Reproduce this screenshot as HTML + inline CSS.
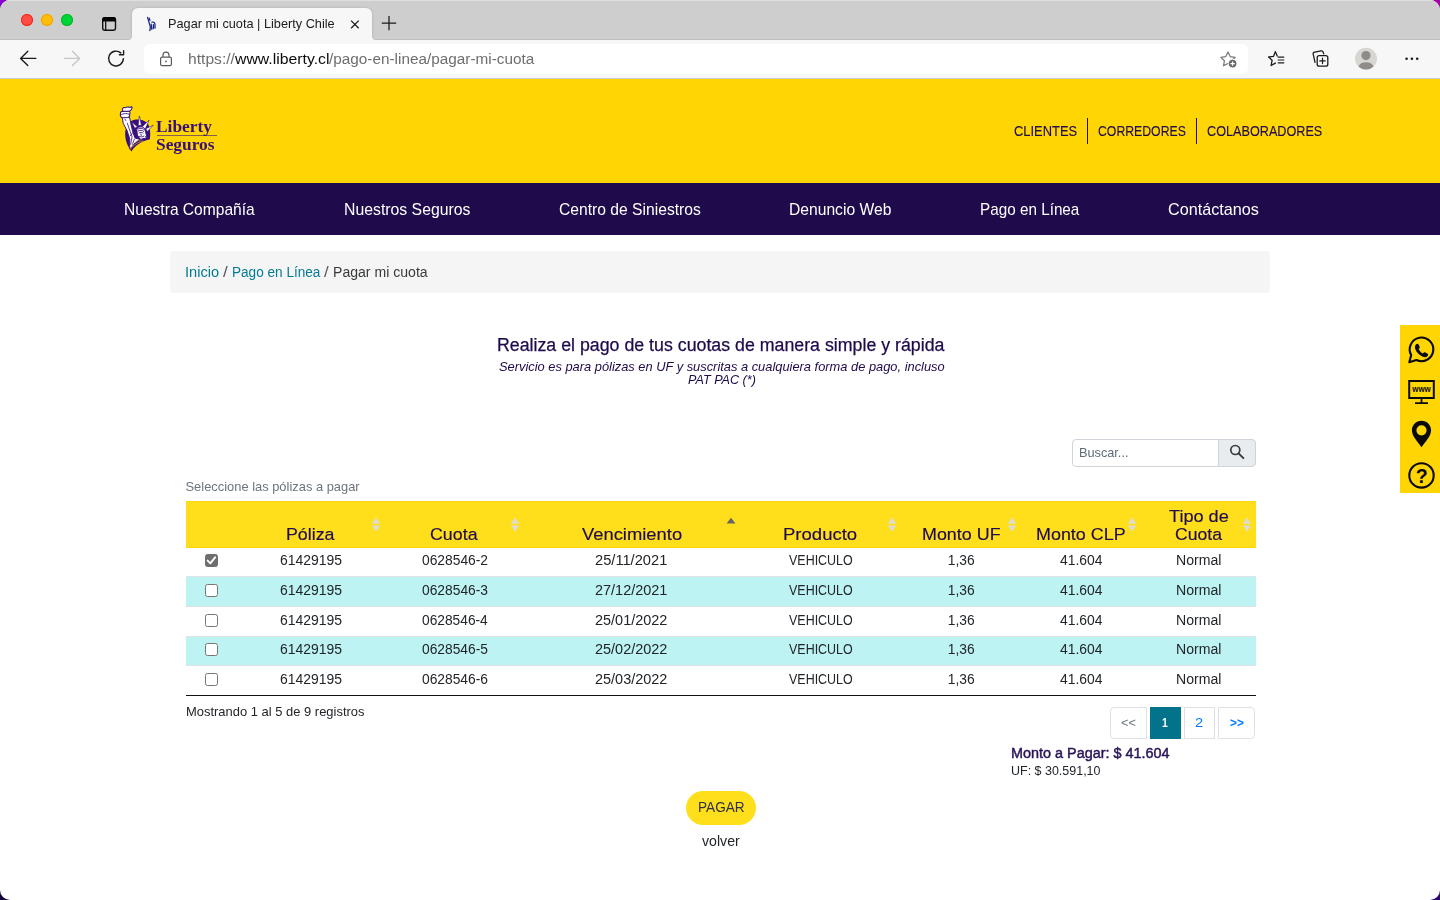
<!DOCTYPE html>
<html lang="es">
<head>
<meta charset="utf-8">
<title>Pagar mi cuota | Liberty Chile</title>
<style>
*{box-sizing:border-box;margin:0;padding:0}
html,body{width:1440px;height:900px;overflow:hidden}
body{background:#14033a;font-family:"Liberation Sans",sans-serif;color:#212529;position:relative}
.win{position:absolute;left:0;top:0;width:1440px;height:900px;border-radius:10px;overflow:hidden;background:#fff}
.abs{position:absolute;white-space:pre;line-height:1;transform-origin:0 0}
.box{position:absolute}
.txt{position:absolute;left:0;top:0;width:1440px;height:900px;will-change:transform}
svg{position:absolute;overflow:visible}
/* browser chrome */
.tabstrip{left:0;top:0;width:1440px;height:40px;background:#cecece;border-top:1px solid #dedede;border-bottom:1px solid #bfbfbf}
.toolbar{left:0;top:40px;width:1440px;height:39px;background:#f7f7f7;border-bottom:1px solid #cdcdcd}
.tl{top:14px;width:12px;height:12px;border-radius:50%}
.tab{left:132px;top:8px;width:240.100px;height:33px;background:#f7f7f7;border-radius:6px 6px 0 0;box-shadow:0 0 3px rgba(0,0,0,0.16)}
.urlbar{left:144px;top:44px;width:1104px;height:30px;background:#fff;border-radius:6px}
/* site */
.hdr{left:0;top:79px;width:1440px;height:104px;background:#ffd504}
.nav{left:0;top:183px;width:1440px;height:52px;background:#1f0a4b}
.sep{top:118px;width:1.1px;height:26px;background:#1f0a4b}
.crumb{left:170px;top:251px;width:1100px;height:42px;background:#f5f5f5;border-radius:4px}
.side{left:1400px;top:325px;width:40px;height:168px;background:#ffd504}
.sinput{left:1072px;top:439px;width:147px;height:27.5px;background:#fff;border:1px solid #ced4da;border-radius:4px 0 0 4px}
.sbtn{left:1218px;top:439px;width:37.5px;height:27.5px;background:#e9ecef;border:1px solid #ced4da;border-radius:0 4px 4px 0}
.thead{left:186px;top:501px;width:1070px;height:47px;background:#ffdf1b;border-top:1.4px solid #ffd60c;border-bottom:1.6px solid #ffd60c}
.row{left:186px;width:1070px;background:#bef3f3}
.rline{left:186px;width:1070px;height:1px;background:#dee2e6}
.tbot{left:186px;top:694.6px;width:1070px;height:1.2px;background:#111}
.cb{left:205px;width:12.6px;height:12.6px;border:1px solid #767676;border-radius:2.5px;background:#fff}
.cb.on{background:#6e6e6e;border-color:#6e6e6e}
.pg{top:707px;height:32px;border:1px solid #dee2e6;border-radius:3px;background:#fff}
.pagar{left:686px;top:790.8px;width:70px;height:34.2px;border-radius:17.1px;background:#ffdf1b}
</style>
</head>
<body>
<div class="box" style="left:0;top:0;width:14px;height:14px;background:#8800c8"></div>
<div class="box" style="left:1426px;top:0;width:14px;height:14px;background:#a300a3"></div>
<div class="box" style="left:0;top:886px;width:14px;height:14px;background:#14033a"></div>
<div class="box" style="left:1426px;top:886px;width:14px;height:14px;background:#2e0672"></div>
<div class="win">
<!-- BROWSER CHROME -->
<div class="box tabstrip"></div>
<div class="box tl" style="left:21px;background:#ff4d45;box-shadow:inset 0 0 0 1px #f2261b"></div>
<div class="box tl" style="left:41px;background:#ffbd08;box-shadow:inset 0 0 0 1px #eda600"></div>
<div class="box tl" style="left:61px;background:#00d335;box-shadow:inset 0 0 0 1px #00b829"></div>
<svg style="left:100px;top:14px" width="20" height="20" viewBox="100 14 20 20">
  <rect x="102.7" y="17.6" width="12.8" height="12.6" rx="2.2" fill="none" stroke="#111" stroke-width="1.4"/>
  <path d="M102.300 21.400h13.600v-2a2.400 2.400 0 0 0-2.400-2.400h-8.800a2.400 2.400 0 0 0-2.400 2.400z" fill="#050505"/>
  <path d="M105.700 20.500v9.600" stroke="#111" stroke-width="1.300"/>
</svg>
<div class="box tab"></div>
<svg style="left:128px;top:36px" width="4" height="4" viewBox="0 0 4 4"><path d="M4 0v4H0a4 4 0 0 0 4-4z" fill="#f7f7f7"/></svg>
<svg style="left:372.100px;top:36px" width="4" height="4" viewBox="0 0 4 4"><path d="M0 0v4h4a4 4 0 0 1-4-4z" fill="#f7f7f7"/></svg>
<!-- favicon -->
<svg style="left:144px;top:15px" width="16" height="18" viewBox="144 15 16 18">
  <g fill="none" stroke="#1c2a8c" stroke-width="1.3" stroke-linecap="round">
    <path d="M147.6 17.4l1.2 4.2 1.6 5.4-.6 3.6"/>
    <path d="M149.2 18.2l.8 2.2"/>
    <path d="M152 22.2c1.8-.6 3 .6 3 2.6v3.2"/>
    <path d="M151.2 24.2l.6 5.2M153.4 24.6v4"/>
  </g>
</svg>
<!-- tab close / new tab -->
<svg style="left:349.400px;top:18.300px" width="12" height="12" viewBox="0 0 12 12"><path d="M2.100 2.600l7.600 7.600M9.700 2.600L2.100 10.200" stroke="#1b1b1b" stroke-width="1.250" fill="none"/></svg>
<svg style="left:381.300px;top:15.400px" width="16" height="16" viewBox="0 0 16 16"><path d="M8 0.900v14.400M0.800 8.100h14.400" stroke="#1b1b1b" stroke-width="1.250" fill="none"/></svg>
<div class="box toolbar"></div>
<!-- nav arrows -->
<svg style="left:18px;top:48px" width="20" height="20" viewBox="18 48 20 20"><path d="M35.8 58.4H20.8M27.8 51.2l-7.2 7.2 7.2 7.2" fill="none" stroke="#1b1b1b" stroke-width="1.4" stroke-linecap="round" stroke-linejoin="round"/></svg>
<svg style="left:62px;top:48px" width="20" height="20" viewBox="62 48 20 20"><path d="M64.4 58.4h15M72.4 51.2l7.2 7.2-7.2 7.2" fill="none" stroke="#c6c6c6" stroke-width="1.4" stroke-linecap="round" stroke-linejoin="round"/></svg>
<svg style="left:106px;top:48px" width="20" height="20" viewBox="106 48 20 20"><path d="M123.4 58.6a7.4 7.4 0 1 1-2.6-5.7M123.6 50.6v4.2h-4.2" fill="none" stroke="#1b1b1b" stroke-width="1.4" stroke-linecap="round" stroke-linejoin="round"/></svg>
<div class="box urlbar"></div>
<!-- lock -->
<svg style="left:158px;top:50px" width="16" height="18" viewBox="158 50 16 18"><rect x="160.6" y="57.2" width="10.8" height="8.4" rx="1.6" fill="none" stroke="#5a5a5a" stroke-width="1.2"/><path d="M163 57v-1.8a3 3 0 0 1 6 0V57" fill="none" stroke="#5a5a5a" stroke-width="1.2"/><circle cx="166" cy="61.4" r="0.9" fill="#5a5a5a"/></svg>
<!-- star+ -->
<svg style="left:1218px;top:49px" width="22" height="20" viewBox="1218 49 22 20">
  <path d="M1228 52l2.2 4.6 5 .7-3.6 3.5.9 5-4.5-2.4-4.5 2.4.9-5-3.6-3.500 5-.7z" fill="none" stroke="#777" stroke-width="1.2" stroke-linejoin="round"/>
  <circle cx="1232.6" cy="63.6" r="4.4" fill="#6b6b6b" stroke="#fff" stroke-width="1"/>
  <path d="M1230.4 63.6h4.400M1232.6 61.4v4.400" stroke="#fff" stroke-width="1.100"/>
</svg>
<!-- favorites -->
<svg style="left:1266px;top:49px" width="20" height="20" viewBox="1266 49 20 20">
  <path d="M1275.400 51.800l-2 4.600-4.800.6 3.500 3.300-1 5.200 4.300-2.400" fill="none" stroke="#1b1b1b" stroke-width="1.3" stroke-linejoin="round" stroke-linecap="round"/>
  <path d="M1275.400 51.800l1.800 4.200" fill="none" stroke="#1b1b1b" stroke-width="1.300" stroke-linecap="round"/>
  <path d="M1278.200 57.200h5.600M1278.200 60h5.600M1278.200 62.800h5.600" stroke="#1b1b1b" stroke-width="1.200" stroke-linecap="round"/>
</svg>
<!-- collections -->
<svg style="left:1310px;top:49px" width="20" height="20" viewBox="1310 49 20 20">
  <path d="M1315 62.400l-1.800-8.200a1.800 1.800 0 0 1 1.400-2.100l6.600-1.200a1.800 1.800 0 0 1 2 1.200l.5 1.800" fill="none" stroke="#1b1b1b" stroke-width="1.300" stroke-linecap="round"/>
  <rect x="1317.200" y="55.600" width="10.600" height="10.600" rx="2" fill="#f7f7f7" stroke="#1b1b1b" stroke-width="1.300"/>
  <path d="M1322.500 58.200v5.400M1319.800 60.900h5.400" stroke="#1b1b1b" stroke-width="1.200" stroke-linecap="round"/>
</svg>
<!-- profile -->
<svg style="left:1354px;top:47px" width="24" height="24" viewBox="0 0 24 24">
  <circle cx="12" cy="11.700" r="11" fill="#d8d6d3"/>
  <circle cx="12" cy="8.600" r="4.600" fill="#8f8b88"/>
  <path d="M4.500 19.500C5.400 16.800 8.300 15.300 12 15.300s6.600 1.500 7.500 4.200A10.900 10.900 0 0 1 4.500 19.500z" fill="#8f8b88"/>
</svg>
<!-- dots -->
<svg style="left:1402px;top:54px" width="20" height="10" viewBox="1402 54 20 10"><circle cx="1406.600" cy="58.700" r="1.300" fill="#1b1b1b"/><circle cx="1411.900" cy="58.700" r="1.300" fill="#1b1b1b"/><circle cx="1417.200" cy="58.700" r="1.300" fill="#1b1b1b"/></svg>

<!-- SITE HEADER -->
<div class="box hdr"></div>
<svg style="left:114px;top:102px" width="50" height="55" viewBox="0 0 818 900">
  <path d="M290 305C350 272 480 275 545 345C600 420 600 540 585 612C470 632 350 700 285 808C215 720 170 600 185 470C195 400 240 340 290 305Z" fill="#38107a"/>
  <path d="M416 228L394 385L448 380Z" fill="#fff" stroke="#38107a" stroke-width="10" stroke-linejoin="round"/>
  <path d="M575 295L460 408L512 440Z" fill="#fff" stroke="#38107a" stroke-width="10" stroke-linejoin="round"/>
  <path d="M642 380L520 438L546 482Z" fill="#fff" stroke="#38107a" stroke-width="10" stroke-linejoin="round"/>
  <path d="M290 322L382 405L340 430Z" fill="#fff" stroke="#38107a" stroke-width="10" stroke-linejoin="round"/>
  <path d="M372 446C400 395 470 395 500 436L515 482L540 585L430 612L382 540Z" fill="#fff" stroke="#38107a" stroke-width="16" stroke-linejoin="round"/>
  <path d="M385 446C420 424 465 426 495 452M390 478C425 456 460 460 492 484M405 508C430 498 458 498 480 508M440 520L446 556M410 560C432 574 466 574 494 556M400 588L430 604M510 556L530 582" fill="none" stroke="#38107a" stroke-width="14"/>
  <path d="M135 255L255 250L285 400L310 500L345 590L430 612C372 640 325 680 295 735L255 765L258 610L215 470L150 350Z" fill="#fff" stroke="#38107a" stroke-width="16" stroke-linejoin="round"/>
  <path d="M178 275L195 310M215 340L295 570M295 570L272 700M335 600L300 700M310 500L260 560" fill="none" stroke="#38107a" stroke-width="13"/>
  <path d="M105 185C100 160 125 150 150 155L240 150C262 150 268 175 255 200C262 225 250 245 235 252L130 256C108 245 100 215 105 185Z" fill="#fff" stroke="#38107a" stroke-width="17" stroke-linejoin="round"/>
  <path d="M118 205C160 185 215 185 252 200" fill="none" stroke="#38107a" stroke-width="14"/>
  <path d="M145 150C120 112 150 82 188 94C212 66 250 100 292 78C304 112 282 142 245 150Z" fill="#fff" stroke="#38107a" stroke-width="17" stroke-linejoin="round"/>
  <path d="M262 778C320 695 400 655 480 636" stroke="#ffd504" stroke-width="9" fill="none"/>
  <path d="M245 745C300 672 380 635 450 618" stroke="#ffd504" stroke-width="6" fill="none"/>
</svg>
<div class="box" style="left:157px;top:134.600px;width:60px;height:1px;background:#38107a;opacity:0.6"></div>
<div class="box sep" style="left:1087px"></div>
<div class="box sep" style="left:1196px"></div>
<div class="box nav"></div>
<div class="box crumb"></div>
<!-- side widget -->
<div class="box side"></div>
<svg style="left:1400px;top:325px" width="40" height="168" viewBox="1400 325 40 168">
  <!-- whatsapp -->
  <path d="M1409.300 362.200L1411.200 355.100A11.800 11.800 0 1 1 1416.400 360z" fill="none" stroke="#0a0a0a" stroke-width="2.100" stroke-linejoin="round"/>
  <path d="M1416.100 344.300c.9-.9 2-.7 2.500.3l1 2c.3.700.1 1.300-.4 1.800l-.6.600c.8 1.900 2.300 3.500 4.300 4.500l.7-.7c.5-.5 1.200-.6 1.800-.3l1.900 1c1 .5 1.100 1.700.3 2.500-1.300 1.300-3 1.500-4.800.7-3.600-1.500-6.300-4.300-7.500-7.700-.6-1.800-.400-3.500.8-4.700z" fill="#0a0a0a"/>
  <!-- monitor -->
  <rect x="1409.200" y="381" width="24.600" height="17" fill="none" stroke="#0a0a0a" stroke-width="2"/>
  <path d="M1421.500 398v5M1415 403.200h13" stroke="#0a0a0a" stroke-width="1.800" fill="none"/>
  <text x="1421.500" y="392.300" text-anchor="middle" font-family="Liberation Sans, sans-serif" font-weight="700" font-size="8.500" textLength="18.500" lengthAdjust="spacingAndGlyphs" fill="#0a0a0a">www</text>
  <!-- pin -->
  <path d="M1421.500 420.800c-5.300 0-9.600 4.200-9.600 9.500 0 6.300 6.600 12.200 9.600 17 3-4.800 9.600-10.700 9.600-17 0-5.300-4.300-9.500-9.600-9.500zm0 4.400a5.100 5.100 0 1 1 0 10.200 5.100 5.100 0 0 1 0-10.200z" fill="#0a0a0a" fill-rule="evenodd"/>
  <!-- help -->
  <circle cx="1421.500" cy="475.400" r="12.200" fill="none" stroke="#0a0a0a" stroke-width="2.100"/>
  <text x="1421.700" y="482.600" text-anchor="middle" font-family="Liberation Sans, sans-serif" font-weight="700" font-size="19.500" fill="#0a0a0a">?</text>
</svg>
<!-- search -->
<div class="box sinput"></div>
<div class="box sbtn"></div>
<svg style="left:1228px;top:443px" width="18" height="18" viewBox="1228 443 18 18"><circle cx="1235.300" cy="450" r="4.500" fill="none" stroke="#343a40" stroke-width="1.700"/><path d="M1238.600 453.300l4.800 4.800" stroke="#343a40" stroke-width="1.900" stroke-linecap="round"/></svg>
<!-- table -->
<div class="box thead"></div>
<div class="box row" style="top:576.400px;height:29.900px"></div>
<div class="box row" style="top:636.300px;height:29px"></div>
<div class="box rline" style="top:576.300px"></div>
<div class="box rline" style="top:606.200px"></div>
<div class="box rline" style="top:636.200px"></div>
<div class="box rline" style="top:665.200px"></div>
<div class="box tbot"></div>
<svg style="left:369.8px;top:514px" width="12" height="20" viewBox="369.8 514 12 20"><path d="M371.6 523.700h8.400l-4.200-6.300z" fill="#dcdcda" fill-opacity="0.95"/><path d="M371.6 525.500h8.400l-4.200 6.300z" fill="#dcdcda" fill-opacity="0.95"/></svg>
<svg style="left:508.5px;top:514px" width="12" height="20" viewBox="508.5 514 12 20"><path d="M510.3 523.700h8.400l-4.200-6.300z" fill="#dcdcda" fill-opacity="0.95"/><path d="M510.3 525.500h8.400l-4.200 6.300z" fill="#dcdcda" fill-opacity="0.95"/></svg>
<svg style="left:725.1px;top:514px" width="12" height="20" viewBox="725.1 514 12 20"><path d="M726.6 523.600h9l-4.500-5.800z" fill="#666"/></svg>
<svg style="left:885.5px;top:514px" width="12" height="20" viewBox="885.5 514 12 20"><path d="M887.3 523.700h8.400l-4.200-6.300z" fill="#dcdcda" fill-opacity="0.95"/><path d="M887.3 525.500h8.400l-4.200 6.300z" fill="#dcdcda" fill-opacity="0.95"/></svg>
<svg style="left:1005.5px;top:514px" width="12" height="20" viewBox="1005.5 514 12 20"><path d="M1007.3 523.700h8.400l-4.200-6.300z" fill="#dcdcda" fill-opacity="0.95"/><path d="M1007.3 525.500h8.400l-4.200 6.300z" fill="#dcdcda" fill-opacity="0.95"/></svg>
<svg style="left:1125.5px;top:514px" width="12" height="20" viewBox="1125.5 514 12 20"><path d="M1127.3 523.700h8.400l-4.200-6.300z" fill="#dcdcda" fill-opacity="0.95"/><path d="M1127.3 525.500h8.400l-4.200 6.300z" fill="#dcdcda" fill-opacity="0.95"/></svg>
<svg style="left:1240.6px;top:514px" width="12" height="20" viewBox="1240.6 514 12 20"><path d="M1242.4 523.700h8.400l-4.200-6.300z" fill="#dcdcda" fill-opacity="0.95"/><path d="M1242.4 525.500h8.400l-4.200 6.300z" fill="#dcdcda" fill-opacity="0.95"/></svg>
<div class="box cb on" style="top:554.200px"></div>
<svg style="left:205px;top:554.200px" width="12.600" height="12.600" viewBox="0 0 12.600 12.600"><path d="M2.600 6.600l2.700 2.700 4.800-6" fill="none" stroke="#fff" stroke-width="1.900" stroke-linecap="round" stroke-linejoin="round"/></svg>
<div class="box cb" style="top:584px"></div>
<div class="box cb" style="top:614.100px"></div>
<div class="box cb" style="top:643.100px"></div>
<div class="box cb" style="top:673.100px"></div>
<!-- pagination -->
<div class="box pg" style="left:1110.300px;width:36.700px;border-radius:4px 0 0 4px"></div>
<div class="box pg" style="left:1150px;width:31px;background:#03738c;border-color:#03738c;border-radius:0"></div>
<div class="box pg" style="left:1184.100px;width:30.900px;border-radius:0"></div>
<div class="box pg" style="left:1218.100px;width:36.600px;border-radius:0 4px 4px 0"></div>
<div class="box pagar"></div>
<div class="txt">
<span class="abs" style="left:167.98px;top:17.67px;font-size:12.2px;color:#1b1b1b;transform:scaleX(1.0438);">Pagar mi cuota | Liberty Chile</span>
<span class="abs" style="left:187.62px;top:50.88px;font-size:15.5px;color:#6e6e6e;transform:scaleX(1.0083);">https://</span>
<span class="abs" style="left:235.11px;top:50.88px;font-size:15.5px;color:#0c0c0c;transform:scaleX(1.0193);">www.liberty.cl</span>
<span class="abs" style="left:329.26px;top:50.88px;font-size:15.5px;color:#6e6e6e;transform:scaleX(0.9886);">/pago-en-linea/pagar-mi-cuota</span>
<span class="abs" style="left:156.13px;top:118.27px;font-size:17.4px;color:#38107a;transform:scaleX(0.9968);font-weight:700;font-family:'Liberation Serif', serif;">Liberty</span>
<span class="abs" style="left:156.19px;top:137.35px;font-size:16.6px;color:#38107a;transform:scaleX(1.0464);font-weight:700;font-family:'Liberation Serif', serif;">Seguros</span>
<a class="abs" style="left:1014.19px;top:124.15px;font-size:14px;color:#1f0a4b;transform:scaleX(0.9217);-webkit-text-stroke:0.12px #1f0a4b;">CLIENTES</a>
<a class="abs" style="left:1098.18px;top:124.15px;font-size:14px;color:#1f0a4b;transform:scaleX(0.8754);-webkit-text-stroke:0.12px #1f0a4b;">CORREDORES</a>
<a class="abs" style="left:1207.11px;top:124.15px;font-size:14px;color:#1f0a4b;transform:scaleX(0.9038);-webkit-text-stroke:0.12px #1f0a4b;">COLABORADORES</a>
<a class="abs" style="left:123.69px;top:201.12px;font-size:16.4px;color:#ffffff;transform:scaleX(0.9504);">Nuestra Compañía</a>
<a class="abs" style="left:343.62px;top:201.12px;font-size:16.4px;color:#ffffff;transform:scaleX(0.9639);">Nuestros Seguros</a>
<a class="abs" style="left:558.55px;top:201.12px;font-size:16.4px;color:#ffffff;transform:scaleX(0.9554);">Centro de Siniestros</a>
<a class="abs" style="left:789.25px;top:201.12px;font-size:16.4px;color:#ffffff;transform:scaleX(0.9545);">Denuncio Web</a>
<a class="abs" style="left:979.68px;top:201.12px;font-size:16.4px;color:#ffffff;transform:scaleX(0.9318);">Pago en Línea</a>
<a class="abs" style="left:1168.22px;top:201.12px;font-size:16.4px;color:#ffffff;transform:scaleX(0.9879);">Contáctanos</a>
<a class="abs" style="left:185.14px;top:265.15px;font-size:14px;color:#047b94;transform:scaleX(1.0436);">Inicio</a>
<span class="abs" style="left:222.57px;top:265.15px;font-size:14px;color:#55595c;transform:scaleX(1.2276);">/</span>
<a class="abs" style="left:231.63px;top:265.15px;font-size:14px;color:#047b94;transform:scaleX(0.9707);">Pago en Línea</a>
<span class="abs" style="left:323.87px;top:265.15px;font-size:14px;color:#55595c;transform:scaleX(1.1997);">/</span>
<span class="abs" style="left:333.06px;top:265.15px;font-size:14px;color:#373a3c;transform:scaleX(1.0051);">Pagar mi cuota</span>
<span class="abs" style="left:496.82px;top:337.10px;font-size:17.6px;color:#1f0a4b;transform:scaleX(1.0099);-webkit-text-stroke:0.25px #1f0a4b;">Realiza el pago de tus cuotas de manera simple y rápida</span>
<span class="abs" style="left:498.80px;top:361.16px;font-size:12.8px;color:#1f0a4b;transform:scaleX(1.0046);font-style:italic;">Servicio es para pólizas en UF y suscritas a cualquiera forma de pago, incluso</span>
<span class="abs" style="left:687.86px;top:374.16px;font-size:12.8px;color:#1f0a4b;transform:scaleX(0.9846);font-style:italic;">PAT PAC (*)</span>
<span class="abs" style="left:1079.12px;top:447.33px;font-size:12.6px;color:#5f6b76;transform:scaleX(1.0094);">Buscar...</span>
<span class="abs" style="left:185.50px;top:481.08px;font-size:12.9px;color:#6c757d;transform:scaleX(1.0000);">Seleccione las pólizas a pagar</span>
<span class="abs" style="left:286.02px;top:525.61px;font-size:17px;color:#1f0a4b;transform:scaleX(1.0469);-webkit-text-stroke:0.15px #1f0a4b;">Póliza</span>
<span class="abs" style="left:430.15px;top:525.61px;font-size:17px;color:#1f0a4b;transform:scaleX(1.0485);-webkit-text-stroke:0.15px #1f0a4b;">Cuota</span>
<span class="abs" style="left:582.29px;top:525.61px;font-size:17px;color:#1f0a4b;transform:scaleX(1.0808);-webkit-text-stroke:0.15px #1f0a4b;">Vencimiento</span>
<span class="abs" style="left:783.18px;top:525.61px;font-size:17px;color:#1f0a4b;transform:scaleX(1.0900);-webkit-text-stroke:0.15px #1f0a4b;">Producto</span>
<span class="abs" style="left:921.75px;top:525.61px;font-size:17px;color:#1f0a4b;transform:scaleX(1.0529);-webkit-text-stroke:0.15px #1f0a4b;">Monto UF</span>
<span class="abs" style="left:1036.47px;top:525.61px;font-size:17px;color:#1f0a4b;transform:scaleX(1.0535);-webkit-text-stroke:0.15px #1f0a4b;">Monto CLP</span>
<span class="abs" style="left:1168.68px;top:507.61px;font-size:17px;color:#1f0a4b;transform:scaleX(1.0660);-webkit-text-stroke:0.15px #1f0a4b;">Tipo de</span>
<span class="abs" style="left:1174.69px;top:525.61px;font-size:17px;color:#1f0a4b;transform:scaleX(1.0355);-webkit-text-stroke:0.15px #1f0a4b;">Cuota</span>
<span class="abs" style="left:280.03px;top:554.32px;font-size:13.8px;color:#212529;transform:scaleX(1.0122);">61429195</span>
<span class="abs" style="left:422.02px;top:554.32px;font-size:13.8px;color:#212529;transform:scaleX(1.0006);">0628546-2</span>
<span class="abs" style="left:595.03px;top:554.32px;font-size:13.8px;color:#212529;transform:scaleX(1.0626);">25/11/2021</span>
<span class="abs" style="left:788.60px;top:554.32px;font-size:13.8px;color:#212529;transform:scaleX(0.9035);">VEHICULO</span>
<span class="abs" style="left:947.83px;top:554.32px;font-size:13.8px;color:#212529;transform:scaleX(1.0000);">1,36</span>
<span class="abs" style="left:1060.04px;top:554.32px;font-size:13.8px;color:#212529;transform:scaleX(1.0070);">41.604</span>
<span class="abs" style="left:1175.64px;top:554.32px;font-size:13.8px;color:#212529;transform:scaleX(1.0204);">Normal</span>
<span class="abs" style="left:280.03px;top:584.32px;font-size:13.8px;color:#212529;transform:scaleX(1.0122);">61429195</span>
<span class="abs" style="left:422.02px;top:584.32px;font-size:13.8px;color:#212529;transform:scaleX(1.0008);">0628546-3</span>
<span class="abs" style="left:595.03px;top:584.32px;font-size:13.8px;color:#212529;transform:scaleX(1.0488);">27/12/2021</span>
<span class="abs" style="left:788.60px;top:584.32px;font-size:13.8px;color:#212529;transform:scaleX(0.9035);">VEHICULO</span>
<span class="abs" style="left:947.83px;top:584.32px;font-size:13.8px;color:#212529;transform:scaleX(1.0000);">1,36</span>
<span class="abs" style="left:1060.04px;top:584.32px;font-size:13.8px;color:#212529;transform:scaleX(1.0070);">41.604</span>
<span class="abs" style="left:1175.64px;top:584.32px;font-size:13.8px;color:#212529;transform:scaleX(1.0204);">Normal</span>
<span class="abs" style="left:280.03px;top:614.32px;font-size:13.8px;color:#212529;transform:scaleX(1.0122);">61429195</span>
<span class="abs" style="left:422.01px;top:614.32px;font-size:13.8px;color:#212529;transform:scaleX(0.9965);">0628546-4</span>
<span class="abs" style="left:595.03px;top:614.32px;font-size:13.8px;color:#212529;transform:scaleX(1.0488);">25/01/2022</span>
<span class="abs" style="left:788.60px;top:614.32px;font-size:13.8px;color:#212529;transform:scaleX(0.9035);">VEHICULO</span>
<span class="abs" style="left:947.83px;top:614.32px;font-size:13.8px;color:#212529;transform:scaleX(1.0000);">1,36</span>
<span class="abs" style="left:1060.04px;top:614.32px;font-size:13.8px;color:#212529;transform:scaleX(1.0070);">41.604</span>
<span class="abs" style="left:1175.64px;top:614.32px;font-size:13.8px;color:#212529;transform:scaleX(1.0204);">Normal</span>
<span class="abs" style="left:280.03px;top:643.32px;font-size:13.8px;color:#212529;transform:scaleX(1.0122);">61429195</span>
<span class="abs" style="left:422.01px;top:643.32px;font-size:13.8px;color:#212529;transform:scaleX(0.9988);">0628546-5</span>
<span class="abs" style="left:595.03px;top:643.32px;font-size:13.8px;color:#212529;transform:scaleX(1.0488);">25/02/2022</span>
<span class="abs" style="left:788.60px;top:643.32px;font-size:13.8px;color:#212529;transform:scaleX(0.9035);">VEHICULO</span>
<span class="abs" style="left:947.83px;top:643.32px;font-size:13.8px;color:#212529;transform:scaleX(1.0000);">1,36</span>
<span class="abs" style="left:1060.04px;top:643.32px;font-size:13.8px;color:#212529;transform:scaleX(1.0070);">41.604</span>
<span class="abs" style="left:1175.64px;top:643.32px;font-size:13.8px;color:#212529;transform:scaleX(1.0204);">Normal</span>
<span class="abs" style="left:280.03px;top:673.32px;font-size:13.8px;color:#212529;transform:scaleX(1.0122);">61429195</span>
<span class="abs" style="left:422.01px;top:673.32px;font-size:13.8px;color:#212529;transform:scaleX(0.9997);">0628546-6</span>
<span class="abs" style="left:595.03px;top:673.32px;font-size:13.8px;color:#212529;transform:scaleX(1.0488);">25/03/2022</span>
<span class="abs" style="left:788.60px;top:673.32px;font-size:13.8px;color:#212529;transform:scaleX(0.9035);">VEHICULO</span>
<span class="abs" style="left:947.83px;top:673.32px;font-size:13.8px;color:#212529;transform:scaleX(1.0000);">1,36</span>
<span class="abs" style="left:1060.04px;top:673.32px;font-size:13.8px;color:#212529;transform:scaleX(1.0070);">41.604</span>
<span class="abs" style="left:1175.64px;top:673.32px;font-size:13.8px;color:#212529;transform:scaleX(1.0204);">Normal</span>
<span class="abs" style="left:185.82px;top:706.16px;font-size:12.8px;color:#212529;transform:scaleX(1.0117);">Mostrando 1 al 5 de 9 registros</span>
<a class="abs" style="left:1121.00px;top:717.46px;font-size:12.8px;color:#6c757d;transform:scaleX(1.0000);">&lt;&lt;</a>
<a class="abs" style="left:1161.72px;top:717.16px;font-size:12.8px;color:#ffffff;transform:scaleX(0.8104);font-weight:700;">1</a>
<a class="abs" style="left:1195.10px;top:717.16px;font-size:12.8px;color:#007bff;transform:scaleX(1.1396);">2</a>
<a class="abs" style="left:1229.52px;top:717.46px;font-size:12.8px;color:#007bff;transform:scaleX(0.9367);font-weight:700;">&gt;&gt;</a>
<span class="abs" style="left:1010.85px;top:746.15px;font-size:14px;color:#2a1458;transform:scaleX(1.0292);-webkit-text-stroke:0.45px #2a1458;">Monto a Pagar: $ 41.604</span>
<span class="abs" style="left:1011.08px;top:765.16px;font-size:12.8px;color:#212529;transform:scaleX(0.9752);">UF: $ 30.591,10</span>
<span class="abs" style="left:697.90px;top:800.15px;font-size:14px;color:#2d3142;transform:scaleX(0.9730);">PAGAR</span>
<a class="abs" style="left:701.97px;top:834.15px;font-size:14px;color:#212529;transform:scaleX(1.0111);">volver</a>
</div>
</div>
</body>
</html>
